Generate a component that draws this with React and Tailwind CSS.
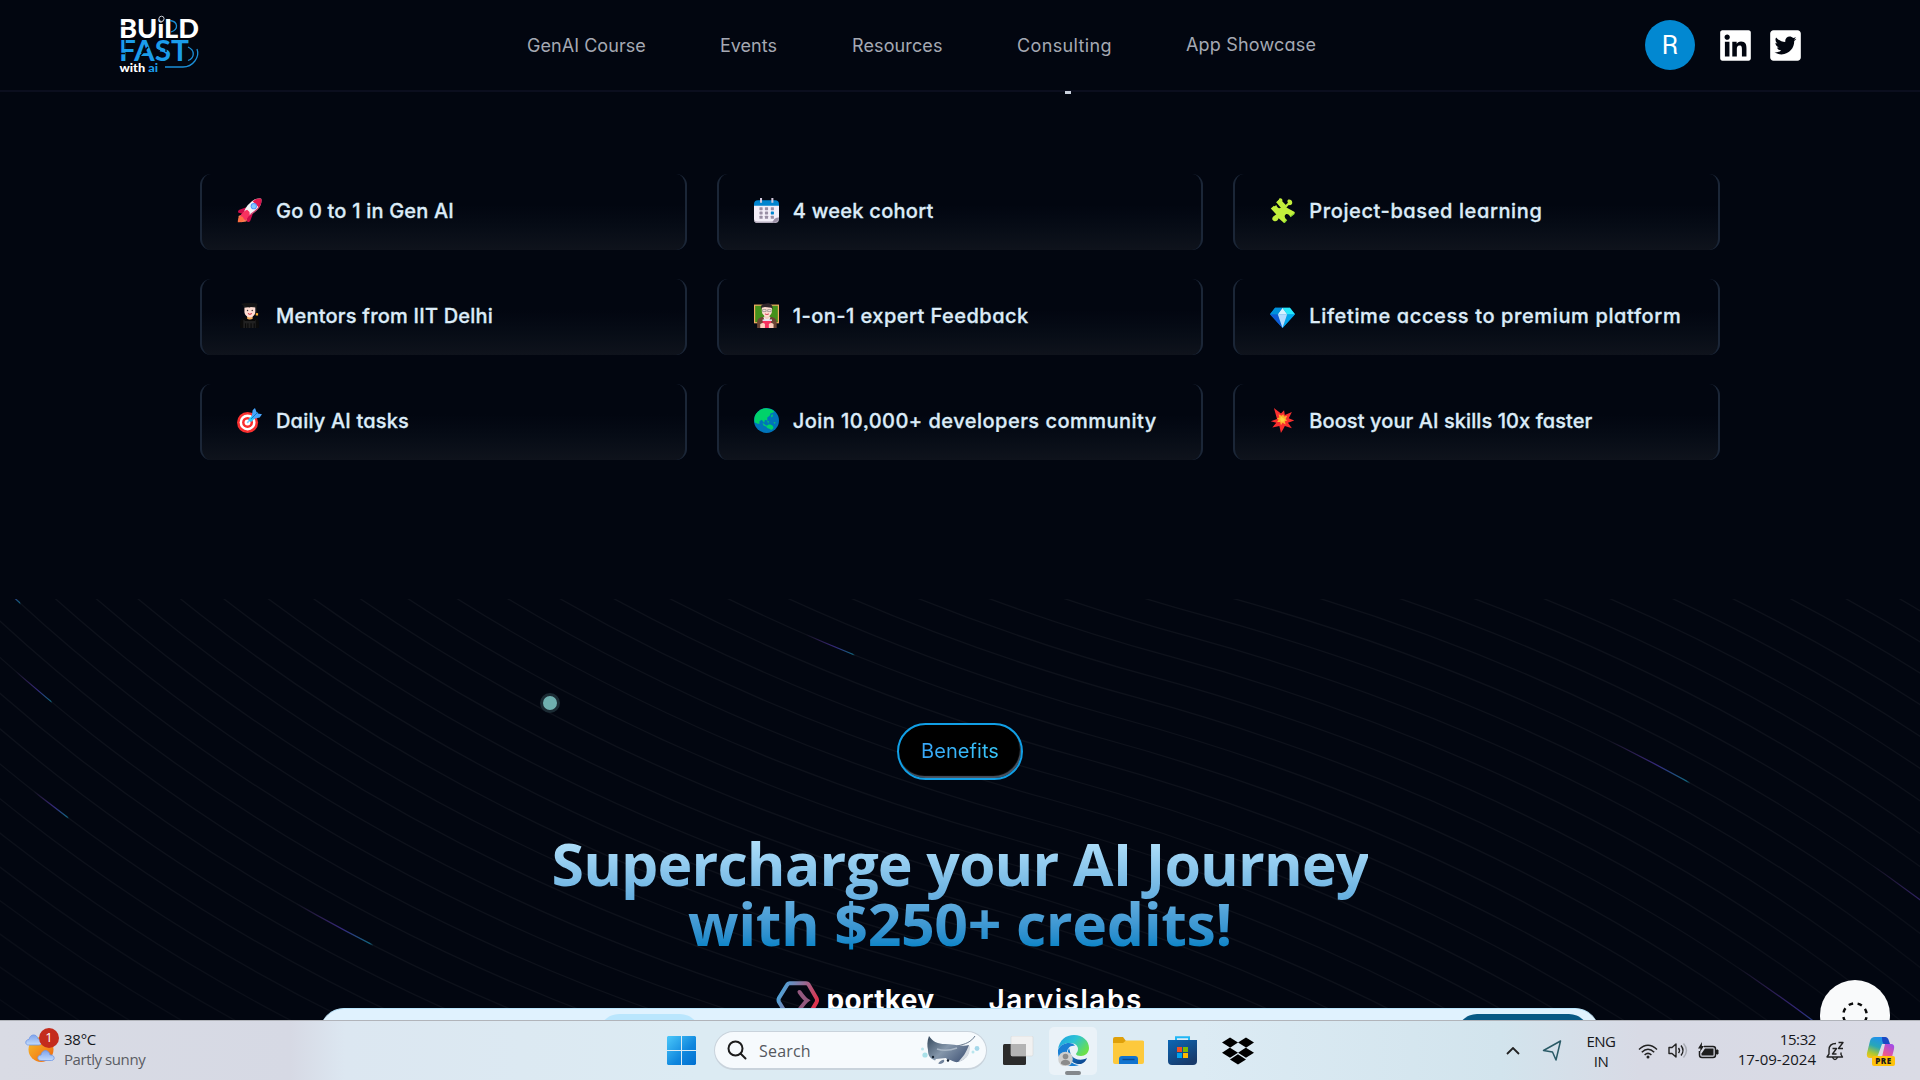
import React from "react";
import { FaLinkedin, FaTwitterSquare, FaDropbox } from "react-icons/fa";

const POP = "font-['Inter','Liberation_Sans',sans-serif] [font-feature-settings:'cv11','ss03']";
const SEGOE = "font-['Open_Sans','Noto_Sans',sans-serif]";

/* ---------- feature card icons (32 x 32 grid) ---------- */

const Rocket = () => (
  <svg viewBox="0 0 32 32" className="size-[25px] shrink-0">
    <path d="M2 23 8 20l6 5-2 5-7 1-3-1z" fill="#ff8257" />
    <path d="M1 31c0-5 2-8 5-8s4 4 2 6-4 2-7 2z" fill="#ff6f42" />
    <path d="M11 12 3 15c-2 1-2 3-1 4l8 2 3-8zM20 21l-3 8c-1 2-3 2-4 1l-2-9 7-3z" fill="#ca0b4a" />
    <path d="M31 1c1 5-1 10-5 14-5 5-11 8-15 9l-3-3C9 16 12 10 17 6c4-4 9-6 14-5z" fill="#f4f4f4" />
    <path d="M31 1c1 5-1 8-3 11L20 4c3-2 6-4 11-3z" fill="#e5174e" />
    <path d="M31 1c1 5-1 10-5 14-5 5-9 7-13 8 8-5 13-9 15.500-13z" fill="#ca0b4a" opacity=".8" />
    <path d="M13 15c-4 1-7 5-9 8l3 1c1 1 2 4 4 5 3-4 6-7 5-11z" fill="#f8315f" />
    <circle cx="21.500" cy="10.500" r="4" fill="#5092ff" />
    <circle cx="21.500" cy="10.500" r="2.800" fill="#83cbff" />
  </svg>
);

const Calendar = () => (
  <svg viewBox="0 0 32 32" className="size-[25px] shrink-0">
    <path d="M0 9h32v18l-5 5H5q-5 0-5-5z" fill="#f3eef8" />
    <path d="M32 25v2q0 5-5 5H5q-5 0-5-4 2 2 5 2h18z" fill="#b4acbc" />
    <path d="M24 32q1-7 8-7-1 6-8 7z" fill="#998ea4" />
    <path d="M0 10V8q0-5 5-5h22q5 0 5 5v2z" fill="#0084ce" />
    {[13, 18.5, 24].map((y) =>
      [8, 15, 22.5].map((x) => (
        <rect key={x + "-" + y} x={x - 1} y={y - 1.3} width="4" height="4" rx=".6" fill={y === 18.5 && x === 22.5 ? "#0084ce" : "#998ea4"} />
      ))
    )}
    <path d="M9 0v6M23.500 0v6" stroke="#d3c9dd" strokeWidth="2.600" />
  </svg>
);

const Puzzle = () => (
  <svg viewBox="0 0 32 32" className="size-[25px] shrink-0" fill="#c3ef3c">
    <path d="M8 5.500 11.500 2c-.5-1.500 2-2.500 3.500-1s1 3.500 0 5l4 4 4-4c-1.500-2-.5-4 1.500-4s4 1.500 4 4-2 3.500-4.500 3L21 12l10 5.500c1 1 1 2 0 3l-5 3.500c-1.500-3-4-4.500-6-3s-1.500 4.500 1.500 7L18 32l-7-6c-1 3-3 4.500-6 3.500s-3-5 1-7L9 20l-6.500-6.500L8 9c1 3 3.500 5 5.500 3.500S14 8 11.500 7z" />
    <path d="M1 13.500 5 10l5.500 5.500L11 20 9 22zM8 5.500l5-4 8 8-1 5-7-3z" />
    <path d="m18 32 3.500-4M26 24l5-4" stroke="#86d72f" strokeWidth="1.500" />
  </svg>
);

const Graduate = () => (
  <svg viewBox="0 0 32 32" className="size-[25px] shrink-0">
    <path d="M4 32v-7c0-5 4-7 8-7h8c4 0 8 2 8 7v7z" fill="#0b0b0b" />
    <path d="M8 32V22h16v10z" fill="#212121" />
    <path d="M11 32v-6M14 32v-6M18 32v-6M22 32v-6" stroke="#050505" strokeWidth="1.200" />
    <path d="M13 15h7v5q-3.500 3-7 0z" fill="#f3ad61" />
    <path d="M9.500 5h14v6c0 4-3 7.500-7 7.500s-7-3.500-7-7.500z" fill="#ffddd3" />
    <path d="M8 3h17v3l-8-1-8 1z" fill="#1c1c1c" />
    <path d="M6 1.500 16 0l10 1.500L16 5zM25 2v11" fill="#141414" stroke="#141414" strokeWidth="1.400" />
    <path d="M24 13h3v3h-3z" fill="#ffb02e" />
    <circle cx="13.500" cy="9.500" r=".9" fill="#333" />
    <circle cx="19.500" cy="9.500" r=".9" fill="#333" />
    <path d="M14 13.500q2.500 2 5 0" stroke="#c1122f" strokeWidth="1.200" fill="none" />
    <path d="M10 19q6 5 13 0v4H10z" fill="#090909" />
  </svg>
);

const Teacher = () => (
  <svg viewBox="0 0 32 32" className="size-[25px] shrink-0">
    <rect x="0" y="2" width="32" height="24" fill="#f3ad61" />
    <rect x="1.500" y="3.500" width="29" height="21" fill="#44911b" />
    <path d="M4 32v-7c0-5 4-7 8-7h9c4 0 8 2 8 7v7z" fill="#6d4534" />
    <path d="M12 18h9l-2 6h-5z" fill="#f4f4f4" />
    <path d="M13 14h7v5q-3.500 3-7 0z" fill="#f3cfc1" />
    <path d="M10 5h13v5c0 4-3 7.500-6.500 7.500S10 14 10 10z" fill="#ffddd3" />
    <path d="M9 8c-1-5 2-7 5-7 5-2 10 0 10 7l-2-2-8-1-4 1z" fill="#30262b" />
    <path d="M11 8.500h4.500v2.500H11zM17.500 8.500H22v2.500h-4.500z" fill="#ffe9e2" stroke="#777" strokeWidth=".8" />
    <path d="M14 14q2.500 1.500 5 0" stroke="#c1122f" strokeWidth="1" fill="none" />
    <path d="M11 22h11v10H11z" fill="#f8315f" />
    <path d="M11 21h12v2H11z" fill="#e6e6f5" />
    <path d="M8 27q4-3 6 0v5H8zM19 27q3-3 6 0v5h-6z" fill="#ffcfbf" />
  </svg>
);

const Gem = () => (
  <svg viewBox="0 0 32 32" className="size-[25px] shrink-0">
    <path d="M6.500 6h19L32 14.500 16 32 0 14.500z" fill="#0084ce" />
    <path d="M0 14.500h10L16 32z" fill="#0e5bd6" />
    <path d="M32 14.500H22L16 32z" fill="#00a6ed" />
    <path d="M10 14.500h12L16 32z" fill="#b5dcff" />
    <path d="M16 6 10 14.500h12z" fill="#d6f2ff" />
    <path d="M16 6h9.500L32 14.500H22z" fill="#26eafc" />
    <path d="M6.500 6H16l-6 8.500H0z" fill="#0091dc" />
  </svg>
);

const Target = () => (
  <svg viewBox="0 0 32 32" className="size-[25px] shrink-0">
    <circle cx="13.500" cy="18.500" r="13.500" fill="#f92f2f" />
    <circle cx="13.500" cy="18.500" r="10.200" fill="#fff" />
    <circle cx="13.500" cy="18.500" r="7" fill="#f92f2f" />
    <circle cx="13.500" cy="18.500" r="3.800" fill="#fff" />
    <path d="m13 19 7-7" stroke="#83cbff" strokeWidth="2" />
    <path d="M14 15 20 9l4 3-6 6z" fill="#26c9fc" />
    <path d="m19 10 1-7 3-3 2 5 2 2 5 1-3 4-8 2z" fill="#46a4fb" />
    <path d="m18 14 9-9" stroke="#0074ba" strokeWidth="1" />
  </svg>
);

const Globe = () => (
  <svg viewBox="0 0 32 32" className="size-[25px] shrink-0">
    <circle cx="16" cy="16" r="16" fill="#0074ba" />
    <path d="M3 7C8 1 14-.500 18 1c4 0 7 2 8 4l-5 2-1 3-3 2v4l-3-1-1 4-3-4-3 2v3c-3 1-4-2-6-1-1-4-.5-9 2-12z" fill="#00d26a" />
    <path d="m22 9 2-1v3l-2 1zM11 19l4 3 3 1-2 1-4-2zM17 16l2 1-1 3z" fill="#00d26a" />
    <path d="M16 24c2-4 6-3 8-1 2 3 0 4-2 5-2-2-5-1-6-4zM25 18l3 1-2 1z" fill="#00d26a" />
  </svg>
);

const Boom = () => (
  <svg viewBox="0 0 32 32" className="size-[25px] shrink-0">
    <path d="m5 0 9 7 4-4 1 6 9-4-4 8 7 3-8 3 5 7-9-3-2 4-3 5-2-9-9 2 5-6-7-2 8-3z" fill="#f92f2f" />
    <path d="m11 8 4 2 2-2 1 3 4-1-2 4 2 2-3 1 1 4-4-2-2 3-1-4-4 0 2-3-2-2 3-1z" fill="#ffb02e" />
    <path d="m14 11 3 2 2 1-1 3-3 1-2-3z" fill="#fcd53f" />
  </svg>
);

/* ---------- data ---------- */

const NAV = [
  { label: "GenAI Course", cls: "ml-[327px] w-[119px] tracking-[0.05px]" },
  { label: "Events", cls: "ml-[74px] w-[57px] tracking-[0px]" },
  { label: "Resources", cls: "ml-[75px] w-[91px] tracking-[0.12px]" },
  { label: "Consulting", cls: "ml-[74px] w-[95px] tracking-[0.35px]" },
  { label: "App Showcase", cls: "ml-[74px] w-[130px] -mt-[2px] tracking-[0.18px]" },
];

const FEATURES = [
  { Icon: Rocket, text: "Go 0 to 1 in Gen AI", ls: "tracking-[0.19px]" },
  { Icon: Calendar, text: "4 week cohort", ls: "tracking-[0.28px]" },
  { Icon: Puzzle, text: "Project-based learning", ls: "tracking-[0.6px]" },
  { Icon: Graduate, text: "Mentors from IIT Delhi", ls: "tracking-[0.22px]" },
  { Icon: Teacher, text: "1-on-1 expert Feedback", ls: "tracking-[0.47px]" },
  { Icon: Gem, text: "Lifetime access to premium platform", ls: "tracking-[0.62px]" },
  { Icon: Target, text: "Daily AI tasks", ls: "tracking-[0.18px]" },
  { Icon: Globe, text: "Join 10,000+ developers community", ls: "tracking-[0.48px]" },
  { Icon: Boom, text: "Boost your AI skills 10x faster", ls: "tracking-[0.08px]" },
];

const BEAMS = [
  { i: 36, tail: 287, head: 306.5 },
  { i: 43, tail: 604, head: 636.5 },
  { i: 18, tail: 86, head: 116.3 },
  { i: 16, tail: -18, head: -4 },
  { i: 19, tail: -25, head: -10.5 },
  { i: 21, tail: -31, head: -23 },
  { i: 44, tail: 708, head: 750 },
  { i: 38, tail: 655, head: 696 },
];

const beamPath = (i) => {
  const p = (x, y) => `${x + 7 * i} ${y - 8 * i}`;
  return `M${p(-380, -189)}C${p(-380, -189)} ${p(-312, 216)} ${p(152, 343)}C${p(616, 470)} ${p(684, 875)} ${p(684, 875)}`;
};

/* ---------- header ---------- */

const Logo = () => (
  <svg width="84" height="64" viewBox="116 14 84 64" className="ml-[116px] shrink-0 overflow-visible">
    <g fontFamily="Lato, Inter, sans-serif" fontWeight="900">
      <text x="119" y="38.500" fontSize="27" fill="#fff" textLength="80" lengthAdjust="spacingAndGlyphs">BUiLD</text>
      <text x="119" y="62.300" fontSize="29" fill="#1b9cea" fontWeight="700" textLength="70" lengthAdjust="spacingAndGlyphs">FAST</text>
      <text x="119.500" y="72.800" fontSize="12" fill="#fff" textLength="38.500" lengthAdjust="spacingAndGlyphs">
        with <tspan fill="#1b9cea">ai</tspan>
      </text>
    </g>
    <path d="M119 27h8M125 41v9M120 54.500h5M148 48l-8 9M166 49v4M152 48l8 4" stroke="#020610" strokeWidth="1.300" />
    <circle cx="161.500" cy="19.800" r="2.600" fill="#020610" stroke="#c9ccd2" strokeWidth="1" />
    <g fill="none" stroke="#1b8fd8" strokeWidth="1.300">
      <path d="M170 21.500c8 1 9 9 1 11.500" />
      <path d="M188 48c7 3 7 11 0 13.500" />
      <path d="M197 50c3 8-4 18-14 18h-18" />
    </g>
  </svg>
);

const Header = () => (
  <header className={`flex h-[92px] shrink-0 items-center border-b-2 border-[#0b0e1e] bg-[#020610] ${POP}`}>
    <Logo />
    <nav className="flex items-center whitespace-nowrap pt-[2px] text-[18px] leading-6 text-[#a5a9b3]">
      {NAV.map((n) => (
        <a key={n.label} className={n.cls}>
          {n.label}
        </a>
      ))}
    </nav>
    <div className="ml-auto mr-[117px] flex items-center">
      <div className="flex size-[50px] items-center justify-center rounded-full bg-[#0288d1] pt-[2px] font-['Roboto',sans-serif] text-[25px] text-white">R</div>
      <FaLinkedin className="ml-[23px] size-[35px] text-white" />
      <FaTwitterSquare className="ml-[15px] size-[35px] text-white" />
    </div>
  </header>
);

/* ---------- features ---------- */

const Features = () => (
  <section className={`flex h-[507px] shrink-0 flex-col bg-[#020610] ${POP}`}>
    <div className="relative -mt-px ml-[1065px] h-[3px] w-[6px] bg-[#c9d0dc]" />
    <div className="mx-auto mt-20 grid w-[1520px] grid-cols-3 gap-x-[30px] gap-y-[29px]">
      {FEATURES.map(({ Icon, text, ls }) => (
        <div
          key={text}
          className="flex h-[76px] items-center gap-[14px] whitespace-nowrap rounded-[11px] border-x-2 border-[#1b2637] bg-linear-to-b from-[#020610] from-40% to-[#0f131c] px-[35px] pb-[3px] text-[20px] font-medium text-[#dcecf8] [-webkit-text-stroke:0.3px_#dcecf8]"
        >
          <Icon />
          <span className={ls}>{text}</span>
        </div>
      ))}
    </div>
  </section>
);

/* ---------- benefits ---------- */

const Beams = () => (
  <svg viewBox="0 0 696 316" className="absolute left-0 top-0 h-[800px] w-full" fill="none">
    <defs>
      <radialGradient id="fade" cx="0" cy="0" r="1" gradientUnits="userSpaceOnUse" gradientTransform="translate(352 34) rotate(90) scale(555 1560.62)">
        <stop offset=".0667" stopColor="#d4d4d4" />
        <stop offset=".2432" stopColor="#d4d4d4" />
        <stop offset=".4359" stopColor="#fff" stopOpacity="0" />
      </radialGradient>
      {BEAMS.map((b) => (
        <linearGradient key={b.i} id={"beam" + b.i} gradientUnits="userSpaceOnUse" x1={b.tail} x2={b.head} y1="0" y2="0">
          <stop offset="0" stopColor="#ae48ff" stopOpacity="0" />
          <stop offset=".6" stopColor="#6344f5" />
          <stop offset=".95" stopColor="#18ccfc" />
          <stop offset="1" stopColor="#18ccfc" stopOpacity="0" />
        </linearGradient>
      ))}
    </defs>
    <path d={Array.from({ length: 62 }, (_, i) => beamPath(i)).join("")} stroke="url(#fade)" strokeOpacity=".055" strokeWidth=".5" />
    {BEAMS.map((b) => (
      <path key={b.i} d={beamPath(b.i)} stroke={`url(#beam${b.i})`} strokeOpacity=".45" strokeWidth=".5" />
    ))}
  </svg>
);

const Benefits = () => (
  <section className="relative flex h-[421px] shrink-0 flex-col items-center overflow-hidden bg-[#020610]">
    <Beams />
    <div className="absolute left-[540px] top-[94px] size-5 rounded-full border-[3.5px] border-[#1b2b34] bg-[#6fb0b0]" />
    <div className={`relative mt-[124px] flex h-[57px] w-[126px] items-center justify-center rounded-full border-2 border-[#119fe6] bg-black pb-[2px] text-[20px] shadow-[inset_-1px_-2px_1px_#4b5563] ${POP}`}>
      <span className="bg-linear-to-r from-[#38a6f8] to-[#38c6f8] bg-clip-text tracking-[0.08px] text-transparent">Benefits</span>
    </div>
    <h2 className={`relative mt-[53px] bg-linear-to-b from-[#bae6fd] to-[#0284c7] to-[96%] bg-clip-text text-center text-[59px] font-bold leading-[60px] text-transparent ${SEGOE}`}>
      <span className="tracking-[-0.88px]">Supercharge your AI Journey</span>
      <br />
      <span className="tracking-[-0.4px]">with $250+ credits!</span>
    </h2>
    <div className="relative mt-[23px] flex items-start pr-[2px] font-['Inter',sans-serif] text-white">
      <svg width="44" height="38" viewBox="0 0 44 38" className="mt-[5px]" fill="none">
        <defs>
          <linearGradient id="pk" x1="0" y1="0" x2="44" y2="20" gradientUnits="userSpaceOnUse">
            <stop offset=".15" stopColor="#4ba5dc" />
            <stop offset=".95" stopColor="#e0324c" />
          </linearGradient>
        </defs>
        <path d="M14 2.200h16q2 0 3 2l7.500 13q1 2 0 4L33 34q-1 2-3 2H14q-2 0-3-2L3 21q-1-2 0-4l8-13q1-2 3-1.800z" stroke="url(#pk)" strokeWidth="4" />
        <path d="M23.500 11q5 7 7.500 8.500-2 1.500-7.500 9" stroke="#93597f" strokeWidth="4" strokeLinecap="round" />
      </svg>
      <span className="ml-[7px] mt-[5px] w-[108px] text-[28px] font-bold leading-[38px] tracking-[0.3px]">portkey</span>
      <span className="ml-[54px] mt-[5px] w-[154px] text-[28px] font-semibold leading-[38px] tracking-[1.5px]">Jarvislabs</span>
    </div>
    <div className="absolute -bottom-9 left-[320px] h-12 w-[1279px] rounded-t-[24px] border-t border-[#bae6fd] bg-[#e0f2fe]">
      <div className="mt-[5px] flex justify-between pl-[279px] pr-[10px]">
        <div className="h-10 w-[101px] rounded-[20px] bg-[#bae6fd]" />
        <div className="h-10 w-[132px] rounded-[20px] bg-[#075985]" />
      </div>
    </div>
    <div className="absolute left-[1820px] top-[381px] flex size-[70px] items-center justify-center rounded-full bg-[#f9fafb]">
      <svg width="28" height="28" viewBox="0 0 28 28" fill="none">
        <circle cx="14" cy="14" r="11.700" stroke="#0b0b0b" strokeWidth="2.400" strokeDasharray="4.600 4.588" strokeDashoffset="-2.300" />
      </svg>
    </div>
  </section>
);

/* ---------- taskbar ---------- */

const Weather = () => (
  <div className="relative size-[32px] shrink-0">
    <svg viewBox="0 0 32 32" className="size-8">
      <defs>
        <linearGradient id="sun" x1="0" y1="0" x2="1" y2="1">
          <stop offset="0" stopColor="#f6bf2c" />
          <stop offset="1" stopColor="#f0640e" />
        </linearGradient>
        <linearGradient id="cloud" x1="0" y1="0" x2="0" y2="1">
          <stop offset="0" stopColor="#7ea4ec" />
          <stop offset="1" stopColor="#c3dbfb" />
        </linearGradient>
      </defs>
      <circle cx="16" cy="17.500" r="12.500" fill="url(#sun)" />
      <path d="M3.500 13C-.5 13 0 7.500 4 7.500 5 1.500 12 1.500 13 7c5-.5 5 6 1 6z" fill="url(#cloud)" stroke="#6f97e6" strokeWidth=".8" />
      <path d="M16 28.500c-4.500 0-4-5.500 0-5.500 1-6 8-6 9 0 5-.5 5.500 5.500 1.500 5.500z" fill="url(#cloud)" stroke="#6f97e6" strokeWidth=".8" />
    </svg>
    <div className="absolute -top-[4px] left-[14px] flex size-5 items-center justify-center rounded-full bg-[#c42b1c] text-[13px] text-white">1</div>
  </div>
);

const Windows = () => (
  <svg width="29" height="29" viewBox="0 0 29 29" className="shrink-0">
    <defs>
      <linearGradient id="win" x1="0" y1="0" x2="29" y2="29" gradientUnits="userSpaceOnUse">
        <stop offset="0" stopColor="#4bc8fa" />
        <stop offset=".6" stopColor="#0f86dd" />
        <stop offset="1" stopColor="#006fd0" />
      </linearGradient>
    </defs>
    <path d="M1 0h13v14H0V1zM15 0h13l1 1v13H15zM0 15h14v14H1l-1-1zM15 15h14v13l-1 1H15z" fill="url(#win)" />
  </svg>
);

const Manta = () => (
  <svg width="60" height="31" viewBox="0 0 60 31" className="shrink-0">
    <defs>
      <linearGradient id="manta" x1="0" y1="0" x2="1" y2=".7">
        <stop offset="0" stopColor="#33475b" />
        <stop offset=".5" stopColor="#8597ab" />
        <stop offset="1" stopColor="#46597a" />
      </linearGradient>
    </defs>
    <path d="M36 11C45 9 50 7 54 1" fill="none" stroke="#66788c" strokeWidth="1" />
    <path d="M8 1c4 6 9 8 16 8 8 0 17 3 24 1 1 7-1 14-11 17-4 1-7-3-11-2-3 1-4 4-7 4s-3-3-6-4c-4-2-6-4-6-10C6 11 6 6 8 1z" fill="url(#manta)" />
    <path d="M48 10c2 6 0 14-11 17 5-5 8-9 11-17z" fill="#d6dce3" />
    <path d="M16 14q9 3 20-1" stroke="#a9b7c6" strokeWidth="1.500" fill="none" />
    <path d="M15 24c-2 2-1 5 2 5 1-2 4-5 6-4 1 1-1 3 0 4 4-1 4-4 2-6z" fill="#f5f8fa" />
    <circle cx="12" cy="22" r="1.200" fill="#182433" />
    <circle cx="27" cy="25.500" r="1.200" fill="#182433" />
    <circle cx="4" cy="20" r="2.600" fill="#a9e0e8" />
    <circle cx="1.500" cy="14" r="1.500" fill="#b9e6ee" />
    <circle cx="56" cy="13.500" r="2.400" fill="#a4d7ea" />
    <circle cx="52" cy="17" r="1.500" fill="#b9e6ee" />
  </svg>
);

const TaskView = () => (
  <svg width="31" height="29" viewBox="0 0 31 29" className="shrink-0">
    <rect x="0" y="8" width="23" height="21" rx="1.500" fill="#2b2b2b" />
    <rect x="8" y="0" width="22" height="20" rx="1.500" fill="#f1f1f1" stroke="#d6d6d6" strokeWidth=".6" />
    <path d="M8 8h15v12H9.500Q8 20 8 18.500z" fill="#b4b4b4" />
  </svg>
);

const Edge = () => (
  <svg width="31" height="31" viewBox="0 0 31 31">
    <defs>
      <linearGradient id="edgeA" x1="0" y1="0" x2="1" y2=".6">
        <stop offset="0" stopColor="#1b9de2" />
        <stop offset=".5" stopColor="#2cc3d5" />
        <stop offset="1" stopColor="#6be04a" />
      </linearGradient>
      <linearGradient id="edgeB" x1="0" y1="0" x2="1" y2="1">
        <stop offset="0" stopColor="#1b86d9" />
        <stop offset="1" stopColor="#0b3f86" />
      </linearGradient>
    </defs>
    <path d="M0 15C1 5 8 0 16 0c9 0 15 6 15 13 0 5-4 8-8 8-3 0-5-1-5-2s2-2 2-5c0-4-4-6-8-6C6 8 1 11 0 15z" fill="url(#edgeA)" />
    <path d="M0 15c2-5 7-7 11-7 3 0 5 1 6 3-5-1-8 3-8 7 0 6 5 12 12 12C9 34-1 27 0 15z" fill="#1a7fd4" />
    <path d="M11 13c-4 8 3 17 12 16 3-1 5-3 6-6-5 3-13 2-16-3-1-2-1-5-2-7z" fill="url(#edgeB)" />
    <circle cx="7.500" cy="24" r="7.300" fill="#cfcfcf" />
    <circle cx="7.500" cy="21.500" r="2.800" fill="#8b8b8b" />
    <path d="M2.800 28.500c0-5 9.400-5 9.400 0-2 2-7 2.500-9.400 0z" fill="#8b8b8b" />
  </svg>
);

const Folder = () => (
  <svg width="31" height="27" viewBox="0 0 31 27" className="shrink-0">
    <path d="M0 2q0-2 2-2h8l3 4h16q2 0 2 2v6H0z" fill="#dfa00a" />
    <path d="M0 6h10l3-2.500h16.500q1.500 0 1.500 1.500v20q0 2-2 2H2q-2 0-2-2z" fill="#fdc93c" />
    <path d="M6 27v-5q0-3 3-3h13q3 0 3 3v5z" fill="#1173cf" />
    <path d="M9.500 22.500h12" stroke="#0a4a8f" strokeWidth="1.400" />
  </svg>
);

const Store = () => (
  <svg width="29" height="29" viewBox="0 0 29 29" className="shrink-0">
    <defs>
      <linearGradient id="store" x1="0" y1="0" x2=".6" y2="1">
        <stop offset="0" stopColor="#0b67b5" />
        <stop offset="1" stopColor="#173a6b" />
      </linearGradient>
    </defs>
    <path d="M8 6V1.200h13V6" fill="none" stroke="#20b7f5" strokeWidth="2" />
    <path d="M0 4h29v21q0 4-4 4H4q-4 0-4-4z" fill="url(#store)" />
    <path d="M9 11h5v5H9z" fill="#f25022" />
    <path d="M15 11h5v5h-5z" fill="#7fba00" />
    <path d="M9 17h5v5H9z" fill="#00a4ef" />
    <path d="M15 17h5v5h-5z" fill="#ffb900" />
  </svg>
);

const Copilot = () => (
  <div className="relative size-[30px] shrink-0">
    <svg viewBox="0 0 30 30" className="size-[30px]">
      <defs>
        <linearGradient id="cpA" x1=".6" y1="0" x2=".2" y2="1">
          <stop offset="0" stopColor="#1f8ef0" />
          <stop offset=".45" stopColor="#28a7b8" />
          <stop offset=".8" stopColor="#b5c92c" />
          <stop offset="1" stopColor="#f3c41b" />
        </linearGradient>
        <linearGradient id="cpB" x1=".8" y1="0" x2=".2" y2="1">
          <stop offset="0" stopColor="#a24be8" />
          <stop offset=".6" stopColor="#f0588b" />
          <stop offset="1" stopColor="#ff9a4d" />
        </linearGradient>
      </defs>
      <path d="M9 1h9q3 0 4 4l1 3h-7l-4 11q-1 3-4 3H4q-4 0-3-5L4 5q1-4 5-4z" fill="url(#cpA)" />
      <path d="M16 1h3q3 0 4 4l1 3h-6q-2-1-2-7z" fill="#1a49c4" />
      <path d="M19 8h6q4 0 3 5l-2 8q-1 5-5 5h-9q3-1 4-5z" fill="url(#cpB)" />
    </svg>
    <div className="absolute left-[6px] top-[20px] flex h-[10px] w-[23px] items-center justify-center rounded-[2px] bg-[#ffc20a] text-[8px] font-extrabold tracking-[0.6px] text-[#1a1a1a]">PRE</div>
  </div>
);

const Taskbar = () => (
  <footer className={`flex h-[60px] shrink-0 items-start border-t border-[#b1b4ba] bg-[linear-gradient(90deg,#d9dbe4_0px,#d6d9e4_290px,#dce7f1_345px,#dcebf3_700px,#dcebf4_1200px,#d2e4ed_1500px,#d8dae5_1640px,#dadbe5_1920px)] whitespace-nowrap text-[15px] text-[#16181c] ${SEGOE}`}>
    <div className="flex w-[667px] items-start pl-[25px] pt-[11px]">
      <Weather />
      <div className="-mt-[3px] ml-[7px] leading-5">
        <p className="tracking-[-0.26px]">38°C</p>
        <p className="tracking-[-0.42px] text-[#5a5c63]">Partly sunny</p>
      </div>
    </div>
    <div className="flex h-[59px] items-center">
      <Windows />
      <div className="ml-[18px] flex h-[39px] w-[273px] items-center rounded-full border border-b-2 border-[#c9d3dc] bg-[#f6fafd] pl-[12px] pr-[5px] text-[16px] text-[#55585e]">
        <svg width="20" height="20" viewBox="0 0 20 20" fill="none" stroke="#1c1c1c" strokeWidth="2">
          <circle cx="8.500" cy="8.500" r="7" />
          <path d="m13.500 13.500 5 5" strokeLinecap="round" />
        </svg>
        <span className="ml-[12px] mr-auto pt-px tracking-[0.2px]">Search</span>
        <Manta />
      </div>
      <div className="ml-4">
        <TaskView />
      </div>
      <div className="relative ml-[15px] flex h-12 w-12 items-center justify-center rounded-[5px] bg-[#eaf2f8]">
        <Edge />
        <div className="absolute bottom-0 left-4 h-1 w-4 rounded-full bg-[#84888c]" />
      </div>
      <div className="ml-4">
        <Folder />
      </div>
      <div className="ml-[24px]">
        <Store />
      </div>
      <FaDropbox className="ml-[25px] size-[32px] text-black" />
    </div>
    <div className="ml-auto flex h-[59px] items-center pr-[24px]">
      <svg width="14" height="8" viewBox="0 0 14 8" fill="none" stroke="#222" strokeWidth="1.800"><path d="m1 7 6-6 6 6" /></svg>
      <svg width="20" height="21" viewBox="0 0 20 21" className="ml-[22px]" fill="none" stroke="#2a5a66" strokeWidth="1.500" strokeLinejoin="round"><path d="M18.500 1 1.500 10.500l9 1.500 3.500 8z" /></svg>
      <div className="ml-[23px] w-[32px] text-center leading-5 tracking-[-0.5px]">
        <p>ENG</p>
        <p>IN</p>
      </div>
      <svg width="20" height="16" viewBox="0 0 20 16" className="ml-[21px]" fill="none" stroke="#222" strokeWidth="1.500">
        <path d="M1 6.500q9-8.500 18 0M3.800 9.300q6.200-6 12.400 0M6.600 12q3.400-3.200 6.800 0" />
        <circle cx="10" cy="14" r="1.500" fill="#222" stroke="none" />
      </svg>
      <svg width="21" height="17" viewBox="0 0 21 17" className="ml-[10px]" fill="none" stroke="#222" strokeWidth="1.400" strokeLinejoin="round">
        <path d="M1 5.500h3L8 2v13l-4-3.500H1zM10.500 6q2 2.500 0 5M13 3.500q4 5 0 10" />
        <path d="M15.500 1.500q6 7 0 14" stroke="#a9acb4" />
      </svg>
      <svg width="21" height="18" viewBox="0 0 21 18" className="ml-[9px]" fill="none">
        <path d="M6 4.500h9q2.500 0 2.500 2.500v6q0 2.500-2.500 2.500H4q-2.500 0-2.500-2.500V9" stroke="#1d1d1d" strokeWidth="1.500" />
        <path d="M7 6.500h8.500v7H3.500v-2z" fill="#1d1d1d" />
        <path d="M18.500 8h1.500v4h-1.500z" fill="#1d1d1d" stroke="#1d1d1d" />
        <path d="M4 0 0 6.500h2.500L2 10l4-6H3.800z" fill="#1d1d1d" />
      </svg>
      <div className="ml-[18px] w-[79px] text-right leading-5">
        <p className="-mt-[3px] tracking-[-0.4px]">15:32</p>
        <p>17-09-2024</p>
      </div>
      <svg width="18" height="20" viewBox="0 0 18 20" className="ml-[10px]" fill="none" stroke="#222" strokeWidth="1.400" strokeLinejoin="round">
        <path d="M10 2.500Q3 2.500 3 9v4l-2 3h15.500L15 13.500v-2M6.500 16.500q2.500 4 5 0" />
        <path d="M6.500 7.500h4L6.500 13h4M12.500 1.500H17L12.500 7.500H17" />
      </svg>
      <div className="ml-[22px]">
        <Copilot />
      </div>
    </div>
  </footer>
);

export default function App() {
  return (
    <div className="flex h-[1080px] w-[1920px] flex-col overflow-hidden bg-[#020610]">
      <Header />
      <Features />
      <Benefits />
      <Taskbar />
    </div>
  );
}
